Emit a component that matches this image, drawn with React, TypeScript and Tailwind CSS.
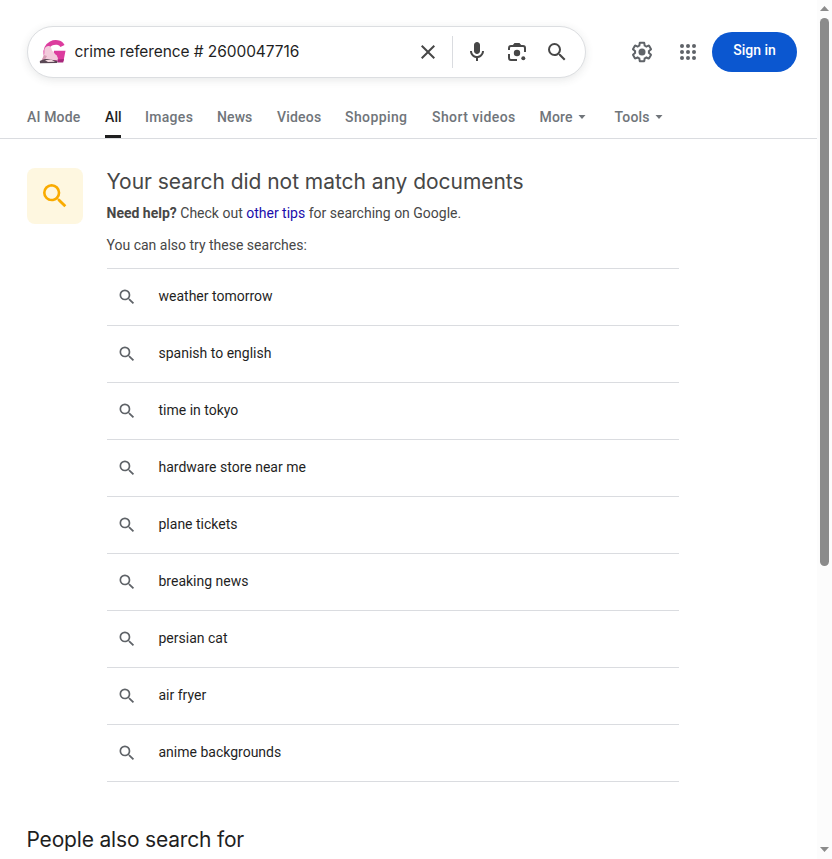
import React from "react";

const SEARCH_PATH =
  "M15.5 14h-.79l-.28-.27A6.471 6.471 0 0 0 16 9.5 6.5 6.5 0 1 0 9.5 16c1.61 0 3.09-.59 4.23-1.57l.27.28v.79l5 4.99L20.49 19l-4.99-5zm-6 0C7.01 14 5 11.99 5 9.5S7.01 5 9.5 5 14 7.01 14 9.5 11.99 14 9.5 14z";

const tabs = [
  { name: "AI Mode", style: "w-[54px] tracking-[0.15px]" },
  { name: "All", style: "w-4 tracking-[0.1px]", active: true },
  { name: "Images", style: "w-12 tracking-[0.3px]" },
  { name: "News", style: "w-9 tracking-[0.1px]" },
  { name: "Videos", style: "w-11 tracking-[0.2px]" },
  { name: "Shopping", style: "w-[63px] tracking-[0.4px]" },
  { name: "Short videos", style: "w-[83.5px] tracking-[0.42px]" },
];

const suggestions = [
  "weather tomorrow",
  "spanish to english",
  "time in tokyo",
  "hardware store near me",
  "plane tickets",
  "breaking news",
  "persian cat",
  "air fryer",
  "anime backgrounds",
];

const Icon = (props: { d: string; className: string }) => (
  <svg viewBox="0 0 24 24" fill="currentColor" className={props.className}>
    <path d={props.d} />
  </svg>
);

const Logo = () => (
  <svg viewBox="0 0 28 28" className="h-7 w-7 shrink-0">
    <path
      d="M23.500 8C21.500 4 16 3.500 12 5.500 8 7.500 6.300 12 6.800 16c.5 4.500 5.500 6 9.700 4.700 3-1 4.500-3 4.700-5.700"
      fill="none"
      stroke="#dc3c9e"
      strokeWidth="4.600"
    />
    <path d="M15 12.700h11.500L24.500 23h-5.500l1-6h-5.500z" fill="#dc3c9e" />
    <path d="M5.500 11c1-2.500 3.500-3.500 5.500-2.500 1.700 1 1.500 3 2 4l3.500 4c2 2 2.500 3 2.500 5.500L3 22.500l2-5.500c.8-2 0-5 .5-6z" fill="#f3cbdc" />
    <path d="m5 17 3 1-2 3.500-4 2z" fill="#d79bb4" />
    <path d="M.8 23c4-2.500 8-2.500 12-1.300l6 1.300-.8 2L1 25.300z" fill="#5a4855" />
    <path d="m6 22.300 6-.8 4 2.200-7 .3z" fill="#f4dbe2" />
    <path d="m18.500 21.500 6.500-.5-.8 3.500h-5.700z" fill="#a8287c" />
  </svg>
);

const Lens = () => (
  <svg viewBox="0 0 24 24" className="h-6 w-6" fill="none" stroke="currentColor" strokeWidth="2">
    <path d="M4 10V8a2 2 0 0 1 2-2h12a2 2 0 0 1 2 2v4M4 14v4a2 2 0 0 0 2 2h6" />
    <path d="M7 6 9.500 3h5L17 6z" fill="currentColor" stroke="none" />
    <circle cx="12" cy="13" r="3.200" fill="currentColor" stroke="none" />
    <circle cx="18.300" cy="18.300" r="2" fill="currentColor" stroke="none" />
  </svg>
);

const Apps = () => (
  <svg viewBox="0 0 24 24" fill="currentColor" className="h-6 w-6">
    {[6, 12, 18].map((y) =>
      [6, 12, 18].map((x) => <circle key={x + "-" + y} cx={x} cy={y} r="2" />),
    )}
  </svg>
);

const Settings = () => (
  <svg viewBox="0 0 24 24" fill="currentColor" className="h-6 w-6">
    <path d="M13.85 22.25h-3.7c-.74 0-1.36-.54-1.45-1.27l-.27-1.89c-.27-.14-.53-.29-.79-.46l-1.8.72c-.7.26-1.47-.03-1.81-.65L2.2 15.53c-.35-.66-.2-1.44.36-1.88l1.53-1.19c-.01-.15-.02-.3-.02-.46 0-.15.01-.31.02-.46l-1.52-1.19c-.59-.45-.74-1.26-.37-1.88l1.85-3.19c.34-.62 1.11-.9 1.79-.63l1.81.73c.26-.17.52-.32.78-.46l.27-1.91c.09-.7.71-1.25 1.44-1.25h3.7c.74 0 1.36.54 1.45 1.27l.27 1.89c.27.14.53.29.79.46l1.8-.72c.71-.26 1.48.03 1.82.65l1.84 3.18c.36.66.2 1.44-.36 1.88l-1.52 1.19c.01.15.02.3.02.46s-.01.31-.02.46l1.52 1.19c.56.45.72 1.23.37 1.86l-1.86 3.22c-.34.62-1.11.9-1.8.63l-1.8-.72c-.26.17-.52.32-.78.46l-.27 1.91c-.1.68-.72 1.22-1.46 1.22zm-3.23-2h2.76l.37-2.55.53-.22c.44-.18.88-.44 1.34-.78l.45-.34 2.38.96 1.38-2.4-2.03-1.58.07-.56c.03-.26.06-.51.06-.78s-.03-.53-.06-.78l-.07-.56 2.03-1.58-1.39-2.4-2.39.96-.45-.35c-.42-.32-.87-.58-1.33-.77l-.52-.22-.37-2.55h-2.76l-.37 2.55-.53.21c-.44.19-.88.44-1.34.79l-.45.33-2.38-.95-1.39 2.39 2.03 1.58-.07.56a7 7 0 0 0-.06.79c0 .26.02.53.06.78l.07.56-2.03 1.58 1.38 2.4 2.39-.96.45.35c.43.33.86.58 1.33.77l.53.22.38 2.55z" />
    <circle cx="12" cy="12" r="3.500" />
  </svg>
);

const Caret = () => (
  <svg viewBox="0 0 8 4" className="ml-[5px] h-1 w-2" fill="currentColor">
    <path d="M.5 0h7L4 4z" />
  </svg>
);

const SearchBar = () => (
  <div className="flex h-13 w-[559px] items-center rounded-full border border-[#dcdee1] bg-white pl-[11px] pr-4 text-[#474747] shadow-[0_2px_8px_rgba(60,64,67,0.12)]">
    <Logo />
    <div className="ml-[7.5px] grow whitespace-nowrap text-[15.5px] leading-6 tracking-[-0.08px] text-[#1f1f1f] font-['Inter',sans-serif]">
      crime reference # 2600047716
    </div>
    <Icon
      className="h-6 w-6"
      d="M19 6.410 17.590 5 12 10.590 6.410 5 5 6.410 10.590 12 5 17.590 6.410 19 12 13.410 17.590 19 19 17.590 13.410 12z"
    />
    <div className="ml-3 h-8 w-px bg-[#dadce0]" />
    <div className="ml-3 flex gap-4">
      <Icon
        className="h-6 w-6"
        d="M12 14c1.660 0 3-1.340 3-3V5c0-1.660-1.340-3-3-3S9 3.340 9 5v6c0 1.660 1.340 3 3 3zM17 11c0 2.760-2.240 5-5 5s-5-2.240-5-5H5c0 3.530 2.610 6.430 6 6.920V21h2v-3.080c3.390-.490 6-3.390 6-6.920z"
      />
      <Lens />
      <Icon className="h-6 w-6" d={SEARCH_PATH} />
    </div>
  </div>
);

const Tabs = () => (
  <div className="flex h-[42px] gap-6 border-b border-[#dadce0] pl-[27px] text-sm font-medium leading-10 text-[#70757a]">
    {tabs.map((tab) => (
      <div
        key={tab.name}
        className={
          tab.active
            ? "h-[41px] whitespace-nowrap border-b-3 border-[#1f1f1f] text-[#1f1f1f] " + tab.style
            : "h-[41px] whitespace-nowrap " + tab.style
        }
      >
        {tab.name}
      </div>
    ))}
    <div className="flex h-10 w-[51px] items-center">
      <span className="w-[33.5px] tracking-[0.2px]">More</span>
      <Caret />
    </div>
    <div className="flex h-10 items-center">
      <span className="w-[35.5px] tracking-[0.2px]">Tools</span>
      <Caret />
    </div>
  </div>
);

const Scrollbar = () => (
  <div className="flex w-[15px] shrink-0 flex-col items-center bg-[#fcfcfc] text-[#8b8b8b]">
    <svg viewBox="0 0 9 5" className="mt-1.5 h-[5px] w-[9px]" fill="currentColor">
      <path d="M4.500 0 9 5H0z" />
    </svg>
    <div className="mt-[7px] h-[548px] w-[9px] rounded-full bg-[#8b8b8b]" />
    <svg viewBox="0 0 9 5" className="mb-[7px] mt-auto h-[5px] w-[9px]" fill="currentColor">
      <path d="M0 0h9L4.500 5z" />
    </svg>
  </div>
);

const App = () => {
  return (
    <div className="flex h-[859px] w-[832px] overflow-hidden bg-white font-['Roboto',sans-serif]">
      <div className="w-[817px]">
        <header className="flex h-[97px] items-start pl-[27px] pt-[26px]">
          <SearchBar />
          <div className="ml-11 flex h-13 items-center gap-[22px] text-[#5f6368]">
            <Settings />
            <Apps />
          </div>
          <button className="ml-3 mt-1.5 h-10 w-[85px] rounded-full bg-[#0b57d0] pb-1 text-sm font-medium text-white">
            Sign in
          </button>
        </header>
        <Tabs />

        <main className="flex pl-[27px] pt-[29px]">
          <div className="flex h-14 w-14 items-center justify-center rounded-lg bg-[#fef7e0] text-[#f9ab00]">
            <Icon className="h-8 w-8" d={SEARCH_PATH} />
          </div>
          <div className="ml-6 w-[572px] text-[#474747]">
            <h1 className="-ml-[0.5px] whitespace-nowrap text-[21px] leading-[27px] tracking-[-0.04px] font-['Inter',sans-serif]">
              Your search did not match any documents
            </h1>
            <p className="-ml-[0.5px] mt-2 text-sm leading-5">
              <b className="font-bold">Need help?</b> Check out{" "}
              <a className="text-[#1a0dab]">other tips</a> for searching on Google.
            </p>
            <p className="-ml-[0.5px] mt-3 text-sm leading-5">You can also try these searches:</p>
            <ul className="mt-[13px] border-t border-[#dadce0]">
              {suggestions.map((text) => (
                <li key={text} className="flex h-[57px] items-center border-b border-[#dadce0] pl-2.5">
                  <Icon className="h-5 w-5 text-[#5f6368]" d={SEARCH_PATH} />
                  <span className="ml-[21.5px] pb-0.5 text-sm text-[#1f1f1f]">{text}</span>
                </li>
              ))}
            </ul>
          </div>
        </main>

        <h2 className="ml-[26.5px] mt-11 whitespace-nowrap text-[21px] leading-[27px] tracking-[-0.18px] text-[#1f1f1f] font-['Inter',sans-serif]">
          People also search for
        </h2>
      </div>
      <Scrollbar />
    </div>
  );
};

export default App;
